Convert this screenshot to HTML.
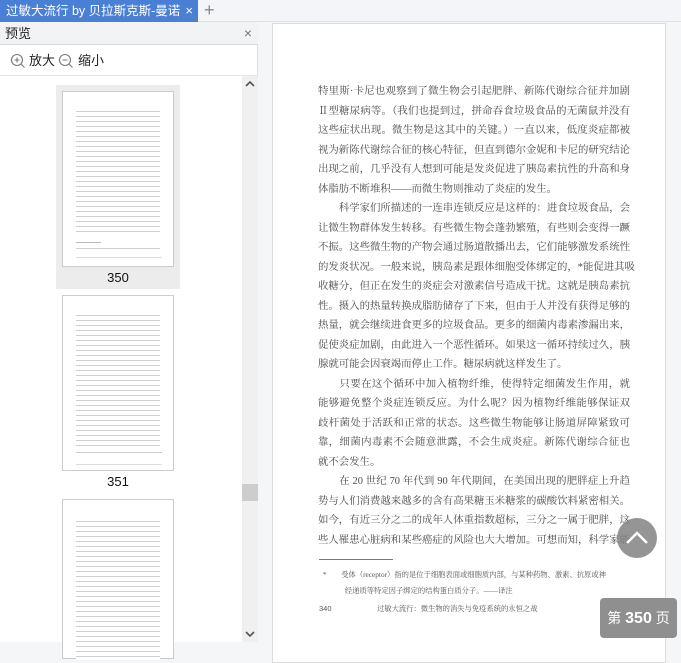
<!DOCTYPE html>
<html><head><meta charset="utf-8">
<style>
*{margin:0;padding:0;box-sizing:border-box}
body{width:681px;height:642px;overflow:hidden;background:#f5f6f8;font-family:"Liberation Sans","Noto Sans CJK SC",sans-serif;position:relative}
.abs{position:absolute}
#tabbar{left:0;top:0;width:681px;height:22px;background:#f3f5f8;border-bottom:1px solid #dcdfe4}
#tab{left:0;top:0;width:198px;height:22px;background:#4a7fd6;color:#fff;font-size:12.5px;line-height:22px;white-space:nowrap;overflow:hidden}
#tab .tt{position:absolute;left:6px;top:0;width:176px;overflow:hidden}
#tab span{position:absolute;right:5px;top:0;font-size:13px}
#plus{left:204px;top:0;color:#888;font-size:18px;line-height:20px}
#left{left:0;top:22px;width:258px;height:620px;background:#fff;border-right:1px solid #e0e0e0}
#hdr{left:0;top:0;width:258px;height:23px;background:#f2f3f5;border-bottom:1px solid #dcdcdc;font-size:13px;line-height:23px;padding-left:5px;color:#222}
#hdr span{position:absolute;right:6px;top:0;color:#777;font-size:14px}
#tools{left:0;top:23px;width:258px;height:31px;border-bottom:1px solid #e6e6e6;font-size:13px;color:#222;line-height:31px}
#sb{left:242px;top:54px;width:16px;height:566px;background:#f0f0f0}
#thumbsel{left:56px;top:63px;width:124px;height:204px;background:#ececec}
.th{position:absolute;left:62px;width:112px;background:#fff;border:1px solid #ccc}
.lines{position:absolute;left:13px;right:13px;background:repeating-linear-gradient(#fff 0,#fff 2px,#d0d0d0 2px,#d0d0d0 3px,#fff 3px,#fff 5px)}
.lbl{position:absolute;left:56px;width:124px;text-align:center;font-size:13px;color:#111}
#page{left:272px;top:23px;width:394px;height:640px;background:#fff;border:1px solid #dcdcdc}
.t{position:absolute;left:45px;width:312px;font-size:10.4px;line-height:19.5px;color:#4a4a4a;font-family:"Liberation Serif","Noto Serif CJK SC",serif;white-space:nowrap}
.t div{height:19.5px;text-align:justify;text-align-last:justify}
.t div.l{text-align-last:left}
#up{left:617px;top:518px;width:40px;height:40px;border-radius:50%;background:rgba(130,130,130,.85)}
#badge{left:600px;top:598px;width:77px;height:40px;border-radius:4px;background:#8f8f8f;color:#fff;font-size:14px;line-height:40px;text-align:center}
</style></head><body>
<div id="tabbar" class="abs"></div>
<div id="tab" class="abs"><div class="tt">过敏大流行 by 贝拉斯克斯-曼诺</div><span>×</span></div>
<div id="plus" class="abs">+</div>

<div id="left" class="abs">
 <div id="hdr" class="abs">预览<span>×</span></div>
 <div id="tools" class="abs">
  <svg class="abs" style="left:10px;top:8px" width="16" height="16" viewBox="0 0 16 16"><circle cx="7" cy="7" r="5.5" fill="none" stroke="#777" stroke-width="1.1"/><path d="M4.5 7h5M7 4.5v5M11 11l3.5 3.5" stroke="#777" stroke-width="1.1"/></svg>
  <span class="abs" style="left:29px;top:0">放大</span>
  <svg class="abs" style="left:58px;top:8px" width="16" height="16" viewBox="0 0 16 16"><circle cx="7" cy="7" r="5.5" fill="none" stroke="#777" stroke-width="1.1"/><path d="M4.5 7h5M11 11l3.5 3.5" stroke="#777" stroke-width="1.1"/></svg>
  <span class="abs" style="left:78px;top:0">缩小</span>
 </div>
 <div id="sb" class="abs">
  <svg class="abs" style="left:3px;top:4px" width="10" height="8" viewBox="0 0 10 8"><path d="M1 6l4-4 4 4" fill="none" stroke="#555" stroke-width="1.6"/></svg>
  <div class="abs" style="left:0;top:408px;width:16px;height:17px;background:#cdcdcd"></div>
  <svg class="abs" style="left:3px;top:554px" width="10" height="8" viewBox="0 0 10 8"><path d="M1 2l4 4 4-4" fill="none" stroke="#555" stroke-width="1.6"/></svg>
 </div>
 <div id="thumbsel" class="abs"></div>
 <div class="th" style="top:69px;height:176px">
  <div class="lines" style="top:17px;height:126px"></div>
  <div class="abs" style="left:13px;top:150px;width:25px;height:1px;background:#bbb"></div>
  <div class="lines" style="top:154px;height:6px"></div>
  <div class="abs" style="left:13px;top:165px;width:86px;height:1px;background:#ddd"></div>
 </div>
 <div class="lbl" style="top:248px">350</div>
 <div class="th" style="top:273px;height:176px">
  <div class="lines" style="top:17px;height:135px"></div>
  <div class="abs" style="left:13px;top:156px;width:86px;height:1px;background:#ccc"></div>
  <div class="abs" style="left:13px;top:168px;width:86px;height:1px;background:#ddd"></div>
 </div>
 <div class="lbl" style="top:452px">351</div>
 <div class="th" style="top:477px;height:160px">
  <div class="lines" style="top:19px;height:141px"></div>
 </div>
</div>

<div id="page" class="abs">
 <div class="t" style="top:58px">
  <div>特里斯·卡尼也观察到了微生物会引起肥胖、新陈代谢综合征并加剧</div>
  <div>Ⅱ型糖尿病等。（我们也提到过，拼命吞食垃圾食品的无菌鼠并没有</div>
  <div>这些症状出现。微生物是这其中的关键。）一直以来，低度炎症都被</div>
  <div>视为新陈代谢综合征的核心特征，但直到德尔金妮和卡尼的研究结论</div>
  <div>出现之前，几乎没有人想到可能是发炎促进了胰岛素抗性的升高和身</div>
  <div class="l">体脂肪不断堆积——而微生物则推动了炎症的发生。</div>
  <div>　　科学家们所描述的一连串连锁反应是这样的：进食垃圾食品，会</div>
  <div>让微生物群体发生转移。有些微生物会蓬勃繁殖，有些则会变得一蹶</div>
  <div>不振。这些微生物的产物会通过肠道散播出去，它们能够激发系统性</div>
  <div>的发炎状况。一般来说，胰岛素是跟体细胞受体绑定的，*能促进其吸</div>
  <div>收糖分，但正在发生的炎症会对激素信号造成干扰。这就是胰岛素抗</div>
  <div>性。摄入的热量转换成脂肪储存了下来，但由于人并没有获得足够的</div>
  <div>热量，就会继续进食更多的垃圾食品。更多的细菌内毒素渗漏出来，</div>
  <div>促使炎症加剧，由此进入一个恶性循环。如果这一循环持续过久，胰</div>
  <div class="l">腺就可能会因衰竭而停止工作。糖尿病就这样发生了。</div>
  <div>　　只要在这个循环中加入植物纤维，使得特定细菌发生作用，就</div>
  <div>能够避免整个炎症连锁反应。为什么呢？因为植物纤维能够保证双</div>
  <div>歧杆菌处于活跃和正常的状态。这些微生物能够让肠道屏障紧致可</div>
  <div>靠，细菌内毒素不会随意泄露，不会生成炎症。新陈代谢综合征也</div>
  <div class="l">就不会发生。</div>
  <div>　　在 20 世纪 70 年代到 90 年代期间，在美国出现的肥胖症上升趋</div>
  <div>势与人们消费越来越多的含有高果糖玉米糖浆的碳酸饮料紧密相关。</div>
  <div>如今，有近三分之二的成年人体重指数超标，三分之一属于肥胖，这</div>
  <div>些人罹患心脏病和某些癌症的风险也大大增加。可想而知，科学家能</div>
 </div>
 <div class="abs" style="left:46px;top:535px;width:74px;height:1px;background:#777"></div>
 <div class="abs" style="left:50px;top:543px;width:300px;font-size:7.3px;line-height:16px;color:#555;font-family:'Liberation Serif','Noto Serif CJK SC',serif;white-space:nowrap">*　　受体（receptor）指的是位于细胞表面或细胞质内部，与某种药物、激素、抗原或神<br>　　　经递质等特定因子绑定的结构蛋白质分子。——译注</div>
 <div class="abs" style="left:46px;top:580px;font-size:7.5px;color:#555">340</div>
 <div class="abs" style="left:104px;top:580px;font-size:7.3px;color:#555;font-family:'Liberation Serif','Noto Serif CJK SC',serif">过敏大流行：微生物的消失与免疫系统的永恒之战</div>
</div>

<div id="up" class="abs"><svg width="40" height="40" viewBox="0 0 40 40"><path d="M10 25l10-10 10 10" fill="none" stroke="#fff" stroke-width="2.5"/></svg></div>
<div id="badge" class="abs">第 <b style="font-size:16px">350</b> 页</div>
</body></html>
